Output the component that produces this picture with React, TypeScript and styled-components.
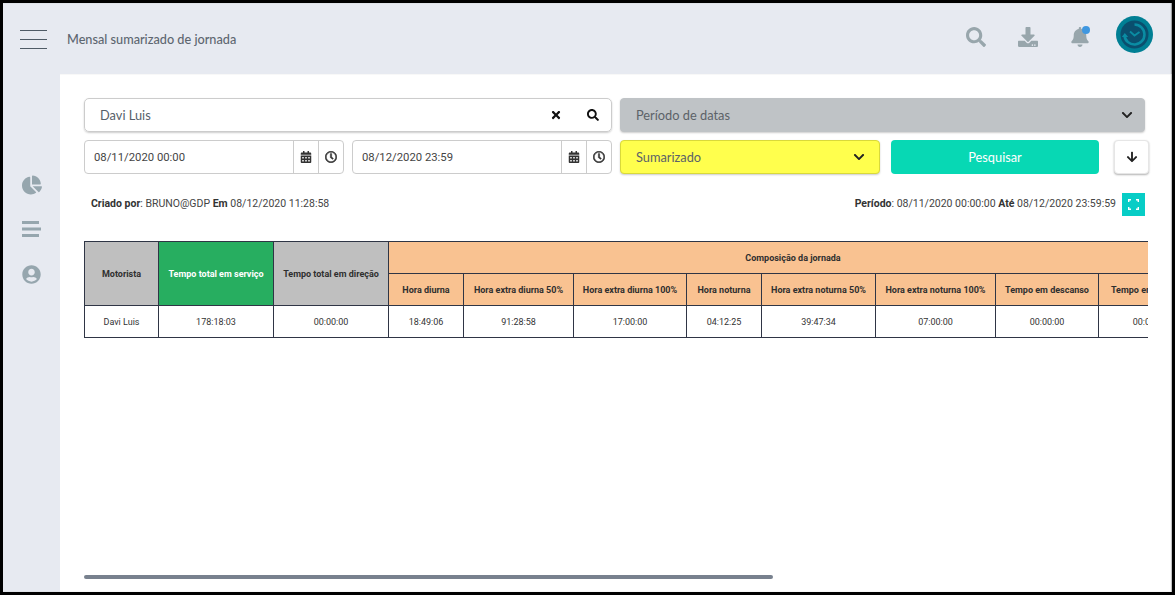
import React from "react";
import styled, { createGlobalStyle } from "styled-components";
import {
  FaCalendarAlt,
  FaChartPie,
  FaChevronDown,
  FaTimes,
  FaSearch,
  FaArrowDown,
  FaDownload,
  FaBell,
  FaUserCircle,
  FaRegClock,
} from "react-icons/fa";

const Global = createGlobalStyle`
  html, body { margin: 0; padding: 0; width: 1175px; height: 595px; overflow: hidden; background: #000; }
  * { box-sizing: border-box; }
`;

const Frame = styled.div`
  width: 1169px;
  height: 589px;
  margin: 3px 0 0 3px;
  background: #e7eaf1;
  display: grid;
  grid-template-columns: 57px 1fr;
  grid-template-rows: 71px 1fr;
  font-family: "Roboto", sans-serif;
  overflow: hidden;
  box-shadow: inset -1px 0 1px #999;
`;

const TopBar = styled.header`
  grid-column: 1 / 3;
  display: flex;
  align-items: center;
  padding: 0 19px 0 17px;
  color: #97a6ab;
`;

const Burger = styled.div`
  width: 27px;
  display: flex;
  flex-direction: column;
  gap: 8px;
  margin-right: 20px;
  margin-top: 1px;
  span { display: block; height: 1px; background: #4f5b66; }
`;

const PageTitle = styled.h1`
  margin: 0;
  flex: 1;
  font: 500 12.7px "Lato", sans-serif;
  color: #5d6670;
`;

const TopActions = styled.div`
  display: flex;
  align-items: center;
  gap: 32px;
  margin-bottom: 4px;
`;

const TopIcon = styled.div`
  width: 20px;
  display: flex;
  justify-content: center;
  position: relative;
  font-size: 20px;
  color: #98a6ac;
`;

const Dot = styled.span`
  position: absolute;
  width: 8px;
  height: 8px;
  top: -1px;
  left: 12px;
  border-radius: 50%;
  background: #3f97e0;
`;

const Avatar = styled.div`
  width: 37px;
  height: 37px;
  margin: 0 0 8px 26px;
  svg { display: block; }
`;

const Side = styled.nav`
  display: flex;
  flex-direction: column;
  align-items: center;
  padding-top: 101px;
  gap: 26px;
  color: #96a6ae;
  svg { display: block; }
`;

const PieIcon = styled(FaChartPie)`
  font-size: 20px;
`;

const UserIcon = styled(FaUserCircle)`
  font-size: 19px;
  margin-top: 2px;
`;

const Main = styled.main`
  background: #fff;
  padding: 24px 24px 0 24px;
  min-width: 0;
  display: flex;
  flex-direction: column;
  box-shadow: inset -1px 0 1px #bbb;
`;

const Row = styled.div`
  display: flex;
  height: 34px;
  margin-bottom: 8px;
  width: 1065px;
`;

const Search = styled.div`
  width: 528px;
  border: 1px solid #ccc;
  border-radius: 5px;
  box-shadow: 0 1px 2px rgba(0, 0, 0, 0.2);
  display: flex;
  align-items: center;
  padding: 0 12px 0 15px;
  font: 400 12.8px "Lato", sans-serif;
  color: #55606a;
  margin-right: 8px;
  span { flex: 1; }
  svg { font-size: 12px; color: #111; margin-left: 25px; }
`;

const Select = styled.div<{ $bg: string; $w: number; $line: string; $pad: number }>`
  width: ${(p) => p.$w}px;
  background: ${(p) => p.$bg};
  border: 1px solid ${(p) => p.$line};
  border-radius: 4px;
  box-shadow: 0 1px 2px rgba(0, 0, 0, 0.2);
  display: flex;
  align-items: center;
  justify-content: space-between;
  padding: 0 ${(p) => p.$pad}px 0 15px;
  font: 400 12.8px "Lato", sans-serif;
  color: #5c6268;
  svg { font-size: 12px; color: #222; }
`;

const DateBox = styled.div`
  width: 260px;
  border: 1px solid #ccc;
  border-radius: 4px;
  display: flex;
  align-items: center;
  margin-right: 8px;
  font-size: 11.3px;
  color: #444;
`;

const DateText = styled.span`
  flex: 1;
  padding-left: 9px;
`;

const DateAddon = styled.span`
  width: 25px;
  height: 100%;
  border-left: 1px solid #ccc;
  display: flex;
  align-items: center;
  justify-content: center;
  color: #333;
  font-size: 12px;
`;

const BoldClock = styled(FaRegClock)`
  stroke: currentColor;
  stroke-width: 22px;
`;

const SearchButton = styled.button`
  width: 208px;
  margin-left: 11px;
  border: 0;
  border-radius: 4px;
  background: #07d8b4;
  color: #fff;
  font: 400 12.8px "Lato", sans-serif;
  padding: 0;
`;

const ArrowButton = styled.button`
  width: 35px;
  margin-left: 15px;
  border: 1px solid #e6e6e6;
  border-radius: 4px;
  background: #fff;
  box-shadow: 0 1px 2px rgba(0, 0, 0, 0.3);
  display: flex;
  align-items: center;
  justify-content: center;
  color: #222;
  font-size: 12px;
  padding: 0;
`;

const InfoBar = styled.div`
  width: 1061px;
  height: 24px;
  margin-top: 9px;
  display: flex;
  align-items: center;
  justify-content: space-between;
  padding-left: 7px;
  font-size: 10.5px;
  color: #444;
  b { font-weight: 700; color: #333; }
`;

const InfoRight = styled.div`
  display: flex;
  align-items: center;
  gap: 6px;
`;

const ExpandButton = styled.span`
  width: 23px;
  height: 23px;
  margin-top: 2px;
  background: #07cdc6;
  display: flex;
  align-items: center;
  justify-content: center;
`;

const TableScroll = styled.div`
  width: 1064px;
  height: 334px;
  margin-top: 26px;
  overflow: hidden;
`;

const ScrollTrack = styled.div`
  width: 1064px;
  height: 4px;
`;

const ScrollThumb = styled.div`
  width: 689px;
  height: 100%;
  background: #78818e;
  border-radius: 2px;
`;

const Table = styled.table`
  border-collapse: collapse;
  table-layout: fixed;
  width: 1650px;
  font-size: 9px;
  color: #333;
  text-align: center;
  th, td { border: 1px solid #2f3545; padding: 0; height: 32px; }
  th { font-weight: 700; color: #2f2f2f; }
`;

const GrayHead = styled.th`
  background: #bfbfbf;
`;

const GreenHead = styled.th`
  background: #27ae60;
  && { color: #fff; }
`;

const OrangeHead = styled.th`
  background: #f9c291;
`;

const GroupLabel = styled.span`
  display: block;
  width: 808px;
`;

const Col = styled.col<{ $w: number }>`
  width: ${(p) => p.$w}px;
`;

const columns: [string, string, number][] = [
  ["Hora diurna", "18:49:06", 75],
  ["Hora extra diurna 50%", "91:28:58", 110],
  ["Hora extra diurna 100%", "17:00:00", 113],
  ["Hora noturna", "04:12:25", 75],
  ["Hora extra noturna 50%", "39:47:34", 114],
  ["Hora extra noturna 100%", "07:00:00", 120],
  ["Tempo em descanso", "00:00:00", 103],
  ["Tempo em refeição", "00:00:00", 103],
  ["Tempo em espera", "00:00:00", 103],
  ["Tempo em parada", "00:00:00", 103],
  ["Tempo em abastecimento", "00:00:00", 125],
  ["Tempo em direção", "00:00:00", 102],
  ["Tempo em carga", "00:00:00", 103],
];

function AvatarLogo() {
  return (
    <svg width="37" height="37" viewBox="0 0 37 37">
      <circle cx="18.5" cy="18.5" r="18.5" fill="#007f94" />
      <circle cx="18.5" cy="18.5" r="14" fill="#0a4f6e" />
      <path d="M18.5 8.5a10 10 0 1 1-10 11" fill="none" stroke="#0a8ca3" strokeWidth="2.6" />
      <path d="M5.8 21l3-4 3.4 4z" fill="#0a8ca3" />
      <path d="M14 15.5l4.5 4 5-3.5" fill="none" stroke="#0a8ca3" strokeWidth="1.8" />
    </svg>
  );
}

function ListIcon() {
  return (
    <svg width="19" height="16" viewBox="0 0 19 16" fill="currentColor">
      <rect x="0" y="0" width="17" height="3" />
      <rect x="0" y="6.5" width="19" height="3" />
      <rect x="0" y="13" width="17" height="3" />
    </svg>
  );
}

function ExpandIcon() {
  return (
    <svg width="11" height="11" viewBox="0 0 11 11" fill="none" stroke="#fff" strokeWidth="1.4">
      <path d="M.7 3V.7H3M8 .7h2.3V3M10.3 8v2.3H8M3 10.3H.7V8" />
    </svg>
  );
}

export default function App() {
  return (
    <>
      <Global />
      <Frame>
        <TopBar>
          <Burger>
            <span />
            <span />
            <span />
          </Burger>
          <PageTitle>Mensal sumarizado de jornada</PageTitle>
          <TopActions>
            <TopIcon>
              <FaSearch />
            </TopIcon>
            <TopIcon>
              <FaDownload />
            </TopIcon>
            <TopIcon>
              <FaBell />
              <Dot />
            </TopIcon>
          </TopActions>
          <Avatar>
            <AvatarLogo />
          </Avatar>
        </TopBar>
        <Side>
          <PieIcon />
          <ListIcon />
          <UserIcon />
        </Side>
        <Main>
          <Row>
            <Search>
              <span>Davi Luis</span>
              <FaTimes />
              <FaSearch />
            </Search>
            <Select $bg="#bfc3c6" $w={525} $line="#bfc3c6" $pad={11}>
              Período de datas
              <FaChevronDown />
            </Select>
          </Row>
          <Row>
            <DateBox>
              <DateText>08/11/2020 00:00</DateText>
              <DateAddon>
                <FaCalendarAlt />
              </DateAddon>
              <DateAddon>
                <BoldClock />
              </DateAddon>
            </DateBox>
            <DateBox>
              <DateText>08/12/2020 23:59</DateText>
              <DateAddon>
                <FaCalendarAlt />
              </DateAddon>
              <DateAddon>
                <BoldClock />
              </DateAddon>
            </DateBox>
            <Select $bg="#ffff4d" $w={260} $line="#d9d93a" $pad={14}>
              Sumarizado
              <FaChevronDown />
            </Select>
            <SearchButton>Pesquisar</SearchButton>
            <ArrowButton>
              <FaArrowDown />
            </ArrowButton>
          </Row>
          <InfoBar>
            <div>
              <b>Criado por</b>: BRUNO@GDP <b>Em</b> 08/12/2020 11:28:58
            </div>
            <InfoRight>
              <div>
                <b>Período</b>: 08/11/2020 00:00:00 <b>Até</b> 08/12/2020 23:59:59
              </div>
              <ExpandButton>
                <ExpandIcon />
              </ExpandButton>
            </InfoRight>
          </InfoBar>
          <TableScroll>
            <Table>
              <colgroup>
                <Col $w={74} />
                <Col $w={115} />
                <Col $w={115} />
                {columns.map((c) => (
                  <Col key={c[0]} $w={c[2]} />
                ))}
              </colgroup>
              <thead>
                <tr>
                  <GrayHead rowSpan={2}>Motorista</GrayHead>
                  <GreenHead rowSpan={2}>Tempo total em serviço</GreenHead>
                  <GrayHead rowSpan={2}>Tempo total em direção</GrayHead>
                  <OrangeHead colSpan={columns.length}>
                    <GroupLabel>Composição da jornada</GroupLabel>
                  </OrangeHead>
                </tr>
                <tr>
                  {columns.map((c) => (
                    <OrangeHead key={c[0]}>{c[0]}</OrangeHead>
                  ))}
                </tr>
              </thead>
              <tbody>
                <tr>
                  <td>Davi Luis</td>
                  <td>178:18:03</td>
                  <td>00:00:00</td>
                  {columns.map((c) => (
                    <td key={c[0]}>{c[1]}</td>
                  ))}
                </tr>
              </tbody>
            </Table>
          </TableScroll>
          <ScrollTrack>
            <ScrollThumb />
          </ScrollTrack>
        </Main>
      </Frame>
    </>
  );
}
